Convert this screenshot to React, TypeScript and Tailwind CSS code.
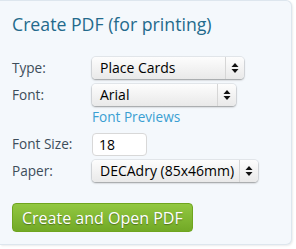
const FONT = { fontFamily: '"Open Sans", "Liberation Sans", sans-serif' };

function Arrows() {
  return (
    <svg width="8" height="12" viewBox="0 0 8 12" aria-hidden="true">
      <path d="M4 1 L7.5 5 L0.5 5 Z" fill="#111" />
      <path d="M4 11 L7.5 7 L0.5 7 Z" fill="#111" />
    </svg>
  );
}

function FakeSelect({ value, width }: { value: string; width: string }) {
  return (
    <div
      className={`${width} flex h-[22px] items-stretch rounded-[4px] bg-gradient-to-b from-[#fdfdfd] to-[#e9e9e9] shadow-[0_0_0_1px_rgba(0,0,0,0.06),0_1px_2px_rgba(0,0,0,0.35)]`}
    >
      <span className="flex-1 truncate pl-2 text-[14px] leading-[22px] text-black">{value}</span>
      <span className="flex w-[19px] items-center justify-center border-l border-[#d6d6d6]">
        <Arrows />
      </span>
    </div>
  );
}

function Row({ label, children }: { label: string; children: React.ReactNode }) {
  return (
    <div className="flex items-center">
      <span className="w-[80px] text-[13.6px] text-[#3d4d5a]">{label}</span>
      {children}
    </div>
  );
}

export default function App() {
  return (
    <div className="h-[249px] w-[296px] bg-white" style={FONT}>
      <div className="h-[245px] w-[292px] rounded-r-[6px] border border-l-0 border-[#dde6ee] bg-[#f4f8fc] pl-3 shadow-[1px_1px_2px_rgba(0,0,0,0.08)]">
        <h2 className="pt-[11px] text-[17.7px] leading-[24px] text-[#236a8c]">Create PDF (for printing)</h2>
        <div className="mt-[21px] flex flex-col gap-[5px]">
          <Row label="Type:">
            <FakeSelect value="Place Cards" width="w-[152px]" />
          </Row>
          <Row label="Font:">
            <FakeSelect value="Arial" width="w-[144px]" />
          </Row>
        </div>
        <div className="ml-[80px] mt-[1px] text-[13.6px] leading-[20px] text-[#3a9fd2]">Font Previews</div>
        <div className="mt-[6px] flex flex-col gap-[4px]">
          <Row label="Font Size:">
            <div className="flex h-[23px] w-[55px] items-center rounded-[4px] border border-[#d8d8d8] bg-white pl-[6px] text-[14px] text-black">
              18
            </div>
          </Row>
          <Row label="Paper:">
            <FakeSelect value="DECAdry (85x46mm)" width="w-[166px]" />
          </Row>
        </div>
        <button className="mt-[21px] h-[29px] rounded-[4px] border border-[#6fa51f] bg-gradient-to-b from-[#92c841] to-[#72a926] px-[9px] text-[16px] text-white [text-shadow:0_1px_1px_rgba(0,0,0,0.35)]">
          Create and Open PDF
        </button>
      </div>
    </div>
  );
}
